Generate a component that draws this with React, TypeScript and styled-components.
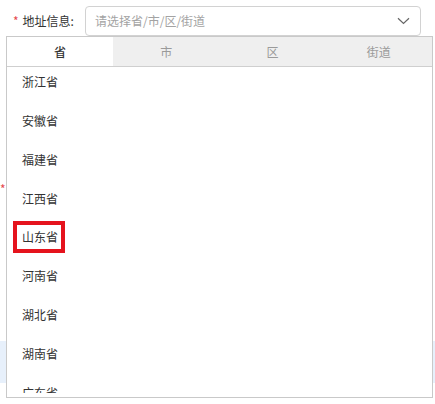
import React from 'react';
import styled, { createGlobalStyle } from 'styled-components';

const GlobalStyle = createGlobalStyle`
  html, body {
    margin: 0;
    padding: 0;
    background: #fff;
  }
  body {
    font-family: "Noto Sans CJK SC", "Noto Sans", sans-serif;
    font-size: 12px;
    color: #333;
  }
`;

const Page = styled.div`
  position: relative;
  width: 435px;
  height: 404px;
  padding-top: 6px;
  box-sizing: border-box;
  overflow: hidden;
`;

const FormRow = styled.div<{ offset?: number }>`
  display: flex;
  align-items: center;
  height: 30px;
  margin-top: ${(props) => props.offset ?? 0}px;
`;

const Label = styled.label<{ indent?: number }>`
  width: ${(props) => 85 - (props.indent ?? 13)}px;
  padding-left: ${(props) => props.indent ?? 13}px;
  line-height: 20px;
  color: #333;
  white-space: nowrap;
`;

const Required = styled.span`
  color: #e5484d;
  margin-right: 4px;
  font-size: 12px;
`;

const Input = styled.div`
  display: flex;
  align-items: center;
  justify-content: space-between;
  width: 336px;
  height: 30px;
  box-sizing: border-box;
  padding: 0 10px 0 9px;
  border: 1px solid #d2d2d2;
  border-radius: 4px;
  background: #fff;
`;

const Placeholder = styled.span`
  color: #a3a3a3;
  line-height: 20px;
`;

const Notice = styled.div<{ offset: number }>`
  margin-top: ${(props) => props.offset}px;
  height: 42px;
  background: #e7f0fb;
`;

const Panel = styled.div`
  position: absolute;
  top: 36px;
  left: 6px;
  width: 427px;
  height: 362px;
  box-sizing: border-box;
  border: 1px solid #c9c9c9;
  background: #fff;
  padding-bottom: 4px;
  display: flex;
  flex-direction: column;
`;

const Tabs = styled.div`
  display: grid;
  grid-template-columns: repeat(4, 1fr);
  height: 30px;
  box-sizing: border-box;
  border-bottom: 1px solid #cfcfcf;
  background: #efefef;
`;

const Tab = styled.div<{ active?: boolean }>`
  display: flex;
  align-items: center;
  justify-content: center;
  background: ${(props) => (props.active ? '#fff' : '#efefef')};
  color: ${(props) => (props.active ? '#333' : '#9a9a9a')};
  font-weight: ${(props) => (props.active ? 500 : 400)};
`;

const List = styled.div`
  flex: 1;
  overflow: hidden;
`;

const Item = styled.div`
  padding: 5px 0 13.86px 15px;
  line-height: 20px;
  color: #333;
`;

const ItemText = styled.span<{ highlight?: boolean }>`
  position: relative;
  display: inline-block;

  &::after {
    content: '';
    display: ${(props) => (props.highlight ? 'block' : 'none')};
    position: absolute;
    top: -6px;
    bottom: -6px;
    left: -9px;
    right: -7px;
    border: 4px solid #e5131d;
  }
`;

const Chevron = () => (
  <svg width="13" height="8" viewBox="0 0 13 8">
    <polyline points="1,1.2 6.5,6.5 12,1.2" fill="none" stroke="#666" strokeWidth="1.2" />
  </svg>
);

const tabs = ['省', '市', '区', '街道'];
const provinces = ['浙江省', '安徽省', '福建省', '江西省', '山东省', '河南省', '湖北省', '湖南省', '广东省'];

const App = () => {
  return (
    <Page>
      <GlobalStyle />
      <FormRow>
        <Label>
          <Required>*</Required>地址信息:
        </Label>
        <Input>
          <Placeholder>请选择省/市/区/街道</Placeholder>
          <Chevron />
        </Input>
      </FormRow>

      {/* next form row, hidden behind the open dropdown */}
      <FormRow offset={138}>
        <Label indent={0}>
          <Required>*</Required>
        </Label>
      </FormRow>

      <Notice offset={137} />

      <Panel>
        <Tabs>
          {tabs.map((t, i) => (
            <Tab key={t} active={i === 0}>
              {t}
            </Tab>
          ))}
        </Tabs>
        <List>
          {provinces.map((p) => (
            <Item key={p}>
              <ItemText highlight={p === '山东省'}>{p}</ItemText>
            </Item>
          ))}
        </List>
      </Panel>
    </Page>
  );
};

export default App;
